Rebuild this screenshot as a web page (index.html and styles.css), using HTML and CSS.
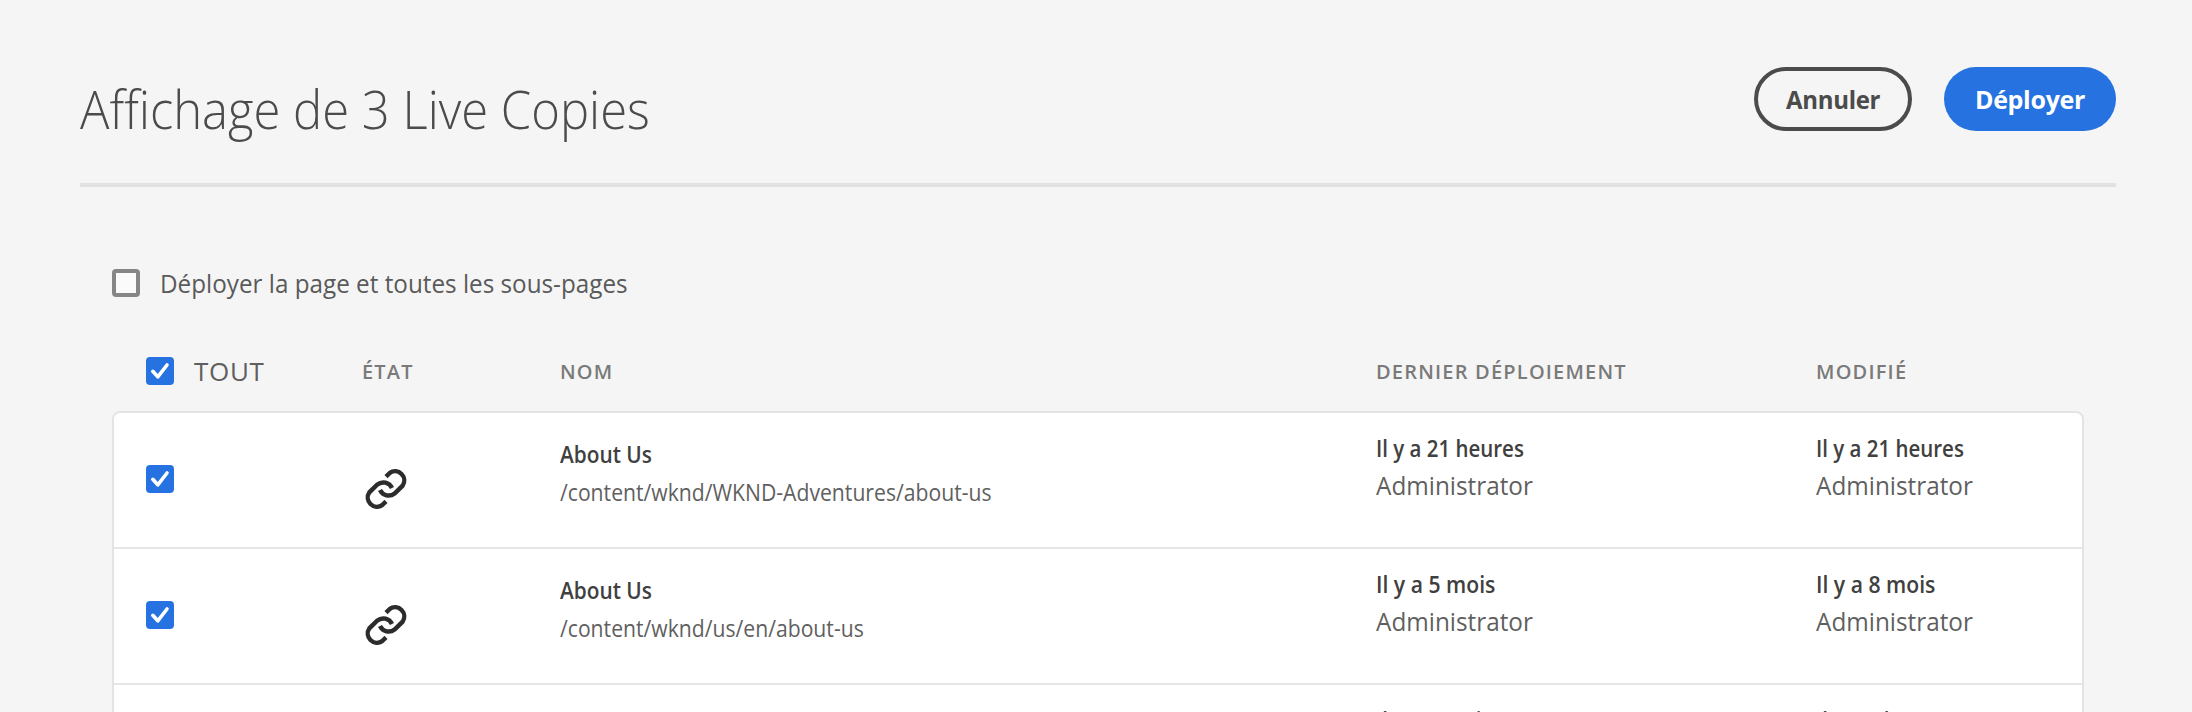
FILE: index.html
```html
<!DOCTYPE html>
<html lang="fr">
<head>
<meta charset="utf-8">
<title>Affichage de 3 Live Copies</title>
<link rel="stylesheet" href="styles.css">
</head>
<body>
<div class="screen">
<svg class="defs" width="0" height="0">
  <symbol id="check" viewBox="0 0 28 28"><path d="M6.8 14.3 L11.8 19.8 L21 8" fill="none" stroke="#fff" stroke-width="3.6" stroke-linecap="round" stroke-linejoin="round"/></symbol>
  <symbol id="link" viewBox="0 0 44 44"><g fill="none" stroke="#2c2c2c" stroke-width="4.4">
    <path d="M22 9.6 L25.8 5.9 A9.2 9.2 0 0 1 38.6 18.7 L30.6 26.5 A9.6 9.6 0 0 1 16 23"/>
    <path d="M22 34.4 L18.2 38.1 A9.2 9.2 0 0 1 5.4 25.3 L13.4 17.5 A9.6 9.6 0 0 1 28 21"/></g></symbol>
</svg>
<header class="header">
  <h1 class="title">Affichage de 3 Live Copies</h1>
  <div class="actions">
    <button class="btn btn-cancel"><span>Annuler</span></button>
    <button class="btn btn-primary"><span>Déployer</span></button>
  </div>
</header>
<main class="content">
  <label class="option"><span class="box"></span><span class="option-label">Déployer la page et toutes les sous-pages</span></label>
  <div class="grid head">
    <div class="all"><svg class="box-on"><use href="#check"/></svg><span class="all-label">TOUT</span></div>
    <div class="th">ÉTAT</div>
    <div class="th">NOM</div>
    <div class="th">DERNIER DÉPLOIEMENT</div>
    <div class="th">MODIFIÉ</div>
  </div>
  <div class="table">
    <div class="grid row">
      <svg class="box-on"><use href="#check"/></svg>
      <svg class="link"><use href="#link"/></svg>
      <div class="name"><b class="name-title">About Us</b><span class="path">/content/wknd/WKND-Adventures/about-us</span></div>
      <div class="when"><b class="ago ago-hours">Il y a 21 heures</b><span class="who">Administrator</span></div>
      <div class="when"><b class="ago ago-hours">Il y a 21 heures</b><span class="who">Administrator</span></div>
    </div>
    <div class="grid row">
      <svg class="box-on"><use href="#check"/></svg>
      <svg class="link"><use href="#link"/></svg>
      <div class="name"><b class="name-title">About Us</b><span class="path">/content/wknd/us/en/about-us</span></div>
      <div class="when"><b class="ago">Il y a 5 mois</b><span class="who">Administrator</span></div>
      <div class="when"><b class="ago">Il y a 8 mois</b><span class="who">Administrator</span></div>
    </div>
    <div class="grid row">
      <span></span>
      <span></span>
      <span></span>
      <div class="when"><b class="ago ago-hours">Il y a 1 mois</b></div>
      <div class="when"><b class="ago ago-hours">Il y a 2 heures</b></div>
    </div>
  </div>
</main>
</div>
</body>
</html>
```
FILE: styles.css
```css
* { box-sizing: border-box; }
body { margin: 0; background: #f5f5f5; color: #4b4b4b;
  font-family: "Open Sans", "Noto Sans", sans-serif; }
.screen { height: 712px; overflow: hidden; }
.defs { display: none; }
.header { display: flex; justify-content: space-between; align-items: flex-start; height: 187px;
  margin: 0 76px 0 80px; padding-top: 67px; border-bottom: 4px solid #e1e1e1; }
.title { margin: 0; font-size: 53px; font-weight: 300; line-height: 83px; white-space: nowrap;
  transform: scaleX(.924); transform-origin: left; }
.actions { display: flex; gap: 32px; }
.btn { display: flex; align-items: center; justify-content: center; height: 64px; padding: 0; border-radius: 32px;
  font-family: inherit; font-size: 25px; font-weight: 700; white-space: nowrap; letter-spacing: -.3px; }
.btn-cancel { width: 158px; border: 4px solid #4b4b4b; background: transparent; color: #4b4b4b; }
.btn-cancel span { transform: scaleX(.96); }
.btn-primary { width: 172px; border: 0; background: #2672e1; color: #fff; }
.content { margin: 0 108px 0 112px; }
.option { display: flex; align-items: center; gap: 20px; margin-top: 77px; height: 38px; font-size: 26px; white-space: nowrap; }
.option-label { color: #5a5a5a; transform: scaleX(.933); transform-origin: left; }
.box { width: 28px; height: 28px; border: 4px solid #868686; border-radius: 4px; background: #fafafa; }
.grid { display: grid; grid-template-columns: 216px 198px 816px 440px 1fr; padding-left: 32px; }
.head { height: 40px; margin: 49px 0 20px 2px; align-items: center; }
.all { display: flex; align-items: center; gap: 20px; }
.all-label { font-size: 26px; color: #5f5f5f; letter-spacing: .7px; }
.box-on { width: 28px; height: 28px; border-radius: 4px; background: #2672e1; }
.th { font-size: 20px; font-weight: 600; color: #7a7a7a; white-space: nowrap; letter-spacing: 1.2px; }
.table { border: 2px solid #e4e4e4; border-radius: 8px; background: #fff; }
.row { height: 136px; border-bottom: 2px solid #e6e6e6; align-items: start; white-space: nowrap; }
.row .box-on { margin-top: 52px; }
.link { width: 44px; height: 44px; margin: 54px 0 0 2px; }
.name, .when { display: flex; flex-direction: column; align-items: flex-start; line-height: 38px; }
.name { padding-top: 22px; }
.when { padding-top: 17px; line-height: 37px; }
.name-title, .ago, .path, .who { transform-origin: left; transform: scaleX(.92); }
.name-title, .ago { font-size: 23px; font-weight: 600; color: #404040; }
.name-title { transform: scaleX(.905); }
.ago-hours { transform: scaleX(.89); }
.path { font-size: 23px; color: #5f5f5f; }
.who { font-size: 25px; color: #5f5f5f; transform: scaleX(.973); }
```
